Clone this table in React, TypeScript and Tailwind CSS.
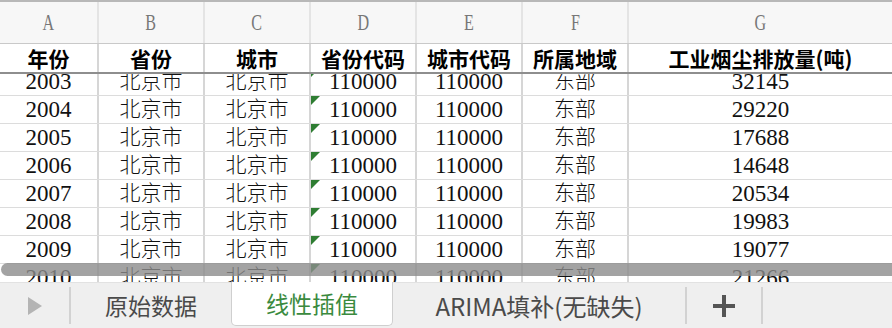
const letters = ["A", "B", "C", "D", "E", "F", "G"];
const heads = ["年份", "省份", "城市", "省份代码", "城市代码", "所属地域", "工业烟尘排放量(吨)"];
const data: [number, number][] = [
  [2003, 32145],
  [2004, 29220],
  [2005, 17688],
  [2006, 14648],
  [2007, 20534],
  [2008, 19983],
  [2009, 19077],
  [2010, 21266],
];

const grid = "grid grid-cols-[99px_106px_106px_106px_106px_106px_1fr]";
const cellFont = { fontFamily: '"Liberation Serif", "Noto Sans CJK SC", serif' };
const cjkFont = { fontFamily: '"Noto Sans CJK SC", "Liberation Sans", sans-serif' };

const Cell = ({ children, last, flag, cjk }: { children: React.ReactNode; last?: boolean; flag?: boolean; cjk?: boolean }) => (
  <div
    className={`relative flex items-center justify-center leading-none text-[#111] ${
      cjk ? "text-[21px] font-light" : "text-[23px]"
    } ${last ? "" : "border-r-2 border-[#d6d6d6]"}`}
  >
    {flag && (
      <span className="absolute left-0 top-0 h-0 w-0 border-t-[9px] border-r-[9px] border-t-[#2e7d32] border-r-transparent" />
    )}
    {children}
  </div>
);

export default function App() {
  return (
    <div className="w-[892px] h-[328px] overflow-hidden bg-white select-none">
      {/* column letters */}
      <div className="h-[2px] bg-[#b8b8b8]" />
      <div className={`${grid} h-[42px] bg-[#f7f7f7] border-b border-[#c9c9c9]`}>
        {letters.map((l, i) => (
          <div
            key={l}
            className={`flex items-center justify-center ${i < 6 ? "border-r-2 border-[#e4e4e4]" : ""}`}
          >
            <span className="inline-block scale-x-[0.7] text-[23px] leading-none text-[#777]" style={cellFont}>
              {l}
            </span>
          </div>
        ))}
      </div>

      {/* frozen header row */}
      <div className={`${grid} h-[30px] border-b-2 border-[#8e8e8e]`}>
        {heads.map((h, i) => (
          <div
            key={h}
            className={`flex items-center justify-center text-[21px] font-bold leading-none text-black ${
              i < 6 ? "border-r-2 border-[#d6d6d6]" : ""
            }`}
            style={cjkFont}
          >
            {h}
          </div>
        ))}
      </div>

      {/* data rows */}
      <div className="relative h-[208px] overflow-hidden">
        <div className="-mt-[6px]" style={cellFont}>
          {data.map(([year, val]) => (
            <div key={year} className={`${grid} h-[28px] border-b border-[#dcdcdc]`}>
              <Cell>{year}</Cell>
              <Cell cjk>北京市</Cell>
              <Cell cjk>北京市</Cell>
              <Cell flag>110000</Cell>
              <Cell>110000</Cell>
              <Cell cjk>东部</Cell>
              <Cell last>{val}</Cell>
            </div>
          ))}
        </div>
        {/* horizontal scrollbar */}
        <div className="absolute left-[1px] right-0 top-[189px] h-[13px] rounded-l-[7px] bg-[#8c8c8c]/80" />
      </div>

      {/* sheet tabs */}
      <div className="flex h-[46px] bg-[#efefef] border-t border-[#e2e2e2]" style={cjkFont}>
        <div className="flex w-[69px] items-center justify-center">
          <svg width="14" height="18" viewBox="0 0 14 18">
            <polygon points="0,0 14,9 0,18" fill="#b4b4b4" />
          </svg>
        </div>
        <div className="my-[4px] w-[2px] bg-[#d2d2d2]" />
        <div className="flex w-[160px] items-center justify-center text-[23px] text-[#4a4a4a]">原始数据</div>
        <div className="-mt-px flex h-[44px] w-[162px] items-center justify-center rounded-b-[5px] border-x border-b border-[#cfcfcf] bg-white text-[23px] text-[#3a8a3e]">
          线性插值
        </div>
        <div className="flex w-[292px] items-center justify-center text-[24px] text-[#4a4a4a]">ARIMA填补(无缺失)</div>
        <div className="my-[4px] w-[2px] bg-[#d2d2d2]" />
        <div className="flex w-[74px] items-center justify-center">
          <svg width="22" height="22" viewBox="0 0 22 22">
            <rect x="0" y="9" width="22" height="4" fill="#555" />
            <rect x="9" y="0" width="4" height="22" fill="#555" />
          </svg>
        </div>
        <div className="my-[4px] w-[2px] bg-[#d2d2d2]" />
        <div className="flex-1" />
      </div>
    </div>
  );
}
